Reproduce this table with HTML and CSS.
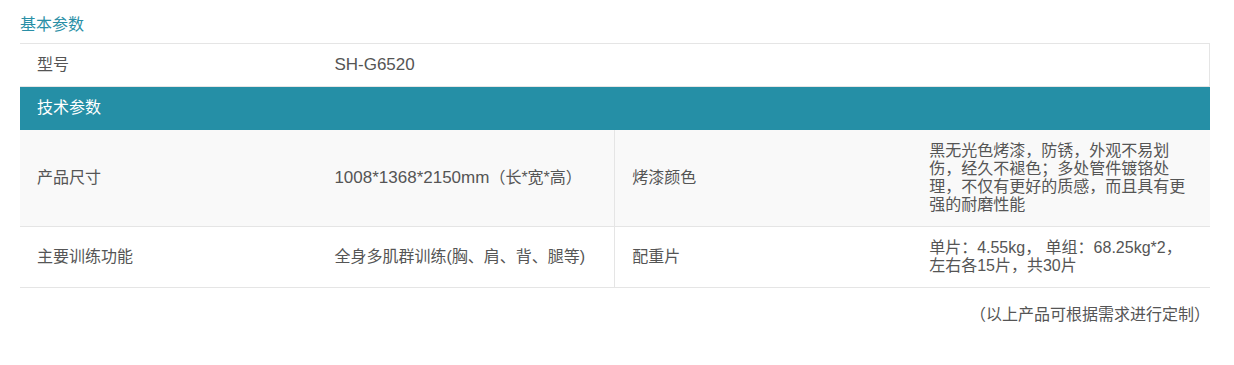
FILE: index.html
```html
<!DOCTYPE html>
<html lang="zh-CN">
<head>
<meta charset="utf-8">
<title>基本参数</title>
<link rel="stylesheet" href="styles.css">
</head>
<body>
<div class="page">
  <div class="section-title">基本参数</div>
  <table class="spec">
    <colgroup>
      <col class="col"><col class="col"><col class="col"><col class="col">
    </colgroup>
    <tbody>
      <tr class="row-model">
        <td>型号</td>
        <td colspan="3" class="last"><span class="lat">SH-G6520</span></td>
      </tr>
      <tr class="row-head">
        <th colspan="4">技术参数</th>
      </tr>
      <tr class="row-alt">
        <td>产品尺寸</td>
        <td class="split"><span class="lat">1008*1368*2150mm</span>（长*宽*高）</td>
        <td>烤漆颜色</td>
        <td>黑无光色烤漆，防锈，外观不易划伤，经久不褪色；多处管件镀铬处理，不仅有更好的质感，而且具有更强的耐磨性能</td>
      </tr>
      <tr>
        <td>主要训练功能</td>
        <td class="split">全身多肌群训练(胸、肩、背、腿等)</td>
        <td>配重片</td>
        <td>单片：4.55kg， 单组：68.25kg*2，左右各15片，共30片</td>
      </tr>
    </tbody>
  </table>
  <div class="note">（以上产品可根据需求进行定制）</div>
</div>
</body>
</html>
```

FILE: styles.css
```css
html, body {
  margin: 0;
  padding: 0;
  background: #ffffff;
}

body {
  font-family: "Liberation Sans", "Noto Sans CJK SC", sans-serif;
  font-size: 16px;
  line-height: 18px;
  color: #555555;
}

.page {
  width: 1190px;
  padding: 0 24px 0 20px;
}

.section-title {
  color: #2a8fa6;
  padding-top: 16px;
  height: 27px;
}

.lat {
  font-size: 17px;
  line-height: 18px;
}

.spec {
  width: 1190px;
  table-layout: fixed;
  border-collapse: collapse;
  border-spacing: 0;
}

.spec .col {
  width: 25%;
}

.spec td,
.spec th {
  padding: 12px 17px;
  text-align: left;
  vertical-align: middle;
  font-weight: normal;
  border-bottom: 1px solid #e5e5e5;
}

.row-model td {
  border-top: 1px solid #e5e5e5;
}

.row-model td.last {
  border-right: 1px solid #e5e5e5;
}

.row-head th {
  background: #258fa6;
  color: #ffffff;
  border-bottom: 1px solid #258fa6;
}

.row-alt td {
  background: #f9f9f9;
}

.spec td.split {
  border-right: 1px solid #e5e5e5;
}

.note {
  text-align: right;
  padding-top: 18px;
  width: 1190px;
}
```
